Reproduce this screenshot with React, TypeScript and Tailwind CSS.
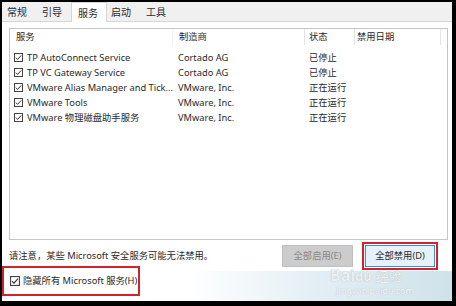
import React from "react";

const font = { fontFamily: '"Noto Sans", "Noto Sans CJK SC", sans-serif' };

function Check({ size = 9 }: { size?: number }) {
  return (
    <svg width={size} height={size} viewBox="0 0 9 9" className="shrink-0">
      <rect x="0.5" y="0.5" width="8" height="8" fill="#fff" stroke="#444" strokeWidth="1" />
      <path d="M1.8 4.6 L3.6 6.4 L7.2 2.4" fill="none" stroke="#333" strokeWidth="1" />
    </svg>
  );
}

const rows = [
  ["TP AutoConnect Service", "Cortado AG", "已停止"],
  ["TP VC Gateway Service", "Cortado AG", "已停止"],
  ["VMware Alias Manager and Tick...", "VMware, Inc.", "正在运行"],
  ["VMware Tools", "VMware, Inc.", "正在运行"],
  ["VMware 物理磁盘助手服务", "VMware, Inc.", "正在运行"],
];

export default function App() {
  return (
    <div className="w-[456px] h-[306px] bg-black pt-[2px] pl-[2px] pr-[4px] pb-[5px] overflow-hidden" style={font}>
      <div className="relative w-full h-full bg-white flex flex-col text-[9.3px] text-[#2a2a2a] leading-none">
        {/* tabs */}
        <div className="h-[20px] bg-[#f0f0f0] border-b border-[#d6d6d6] flex items-end shrink-0 text-[10px]">
          <div className="w-[34px] h-[19px] flex items-center pl-[5px]">常规</div>
          <div className="w-[35px] h-[19px] flex items-center pl-[6px]">引导</div>
          <div className="w-[36px] h-[20px] -mb-px bg-white border border-b-0 border-[#d6d6d6] flex items-center pl-[6px]">服务</div>
          <div className="w-[36px] h-[19px] flex items-center pl-[4px]">启动</div>
          <div className="w-[36px] h-[19px] flex items-center pl-[3px]">工具</div>
        </div>
        {/* list */}
        <div className="pl-[7px] pr-[4px] pt-[6px]">
          <div className="h-[212px] border border-[#c6c6c6] flex flex-col">
            <div className="h-[16px] flex items-center shrink-0">
              <div className="w-[162px] pl-[6px]">服务</div>
              <div className="w-[132px] pl-[6px] h-full flex items-center border-l border-[#f3f3f3]">制造商</div>
              <div className="w-[50px] pl-[4px] h-full flex items-center border-l border-[#e4e4e4]">状态</div>
              <div className="w-[86px] pl-[2px] h-full flex items-center border-l border-[#e4e4e4]">禁用日期</div>
              <div className="flex-1 h-full border-l border-[#e4e4e4]"></div>
            </div>
            <div className="pt-[5px] flex flex-col">
              {rows.map((r, i) => (
                <div key={i} className="h-[15px] flex items-center">
                  <div className="w-[163px] pl-[4px] flex items-center gap-[4px] whitespace-nowrap">
                    <Check />
                    <span>{r[0]}</span>
                  </div>
                  <div className="w-[132px] pl-[5px] whitespace-nowrap">{r[1]}</div>
                  <div className="w-[50px] pl-[4px] whitespace-nowrap">{r[2]}</div>
                </div>
              ))}
            </div>
          </div>
        </div>
        {/* note + buttons */}
        <div className="h-[22px] mt-[5px] pl-[7px] pr-[14px] flex items-center shrink-0">
          <div className="flex-1 whitespace-nowrap">请注意，某些 Microsoft 安全服务可能无法禁用。</div>
          <div className="w-[71px] h-[22px] bg-[#cccccc] border border-[#bfbfbf] text-[#8a8a8a] flex items-center justify-center">全部启用(E)</div>
          <div className="ml-[9px] border-2 border-[#d0232b] p-px">
            <div className="w-[70px] h-[22px] bg-[#e5f1fb] border border-[#3b8ed8] flex items-center justify-center">全部禁用(D)</div>
          </div>
        </div>
        {/* bottom */}
        <div className="relative flex-1">
          <div className="absolute left-[188px] top-[4px] right-0 bottom-0 bg-gradient-to-r from-white via-[#e2eef4] to-[#cfe2ea]"></div>
          <div className="absolute left-0 top-[-1px] w-[138px] h-[30px] border-2 border-[#d0232b] flex items-center pl-[6px] gap-[3px]">
            <Check size={10} />
            <span className="whitespace-nowrap">隐藏所有 Microsoft 服务(H)</span>
          </div>
          <div className="absolute left-[328px] top-[0px] text-[16px] font-bold text-white/80 [text-shadow:0_0_1px_#9aa]">Bai<span className="text-[13px]">du</span> <span className="text-[13px] font-normal">经验</span></div>
          <div className="absolute left-[334px] top-[19px] text-[9px] text-white/85 [text-shadow:0_0_1px_#aab]">jingyan.baidu.com</div>
        </div>
      </div>
    </div>
  );
}
